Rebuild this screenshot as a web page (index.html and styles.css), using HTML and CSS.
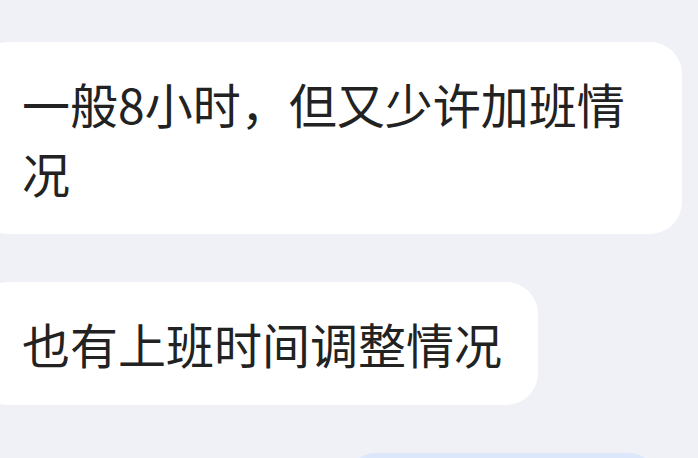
FILE: index.html
```html
<!DOCTYPE html>
<html lang="zh-CN">
<head>
  <meta charset="UTF-8" />
  <title>聊天</title>
  <link rel="stylesheet" href="styles.css">
</head>
<body>
  <div class="chat">
    <div class="msg msg-in">一般8小时，但又少许加班情况</div>
    <div class="msg msg-in">也有上班时间调整情况</div>
    <div class="msg msg-out"></div>
  </div>
</body>
</html>
```

FILE: styles.css
```css
body { margin: 0; background: #f0f1f6; font-family: "Noto Sans CJK SC", "Noto Sans", sans-serif; overflow: hidden; }
.chat { display: flex; flex-direction: column; gap: 48px; padding-top: 42px; }

.msg {
  font-size: 48px;
  line-height: 69px;
  color: #222;
  border-radius: 32px;
  padding: 27px 36px;
}
.msg-in {
  align-self: flex-start;
  background: #fff;
  max-width: 624px;
  margin-left: -24px;
  padding-left: 46px;
}
.msg-out {
  align-self: flex-end;
  background: #dde7fb;
  width: 244px;
  min-height: 69px;
  margin-right: 38px;
}
```
